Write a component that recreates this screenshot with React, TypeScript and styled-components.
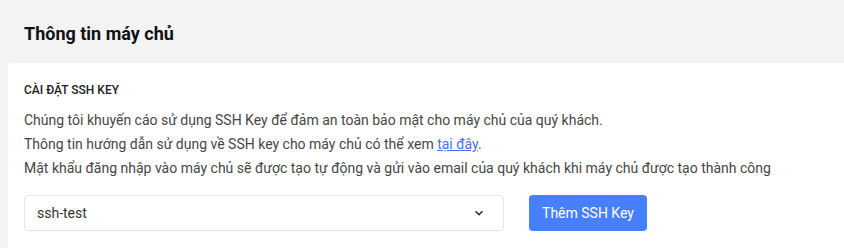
import styled, { createGlobalStyle } from "styled-components";

const GlobalStyle = createGlobalStyle`
  body {
    margin: 0;
    background: #f3f3f3;
    font-family: Roboto, "Liberation Sans", sans-serif;
  }
`;

const Page = styled.div`
  padding-left: 8px;
  min-height: 248px;
  display: flex;
  flex-direction: column;
`;

const Header = styled.header`
  height: 63px;
  padding: 22px 16px 0;
  box-sizing: border-box;
`;

const PageTitle = styled.h1`
  margin: 0;
  font-size: 18px;
  line-height: 24px;
  font-weight: 700;
  color: #111;
`;

const Card = styled.section`
  flex: 1;
  background: #fff;
  border-top-left-radius: 4px;
  padding: 19px 16px 16px;
`;

const CardTitle = styled.h2`
  margin: 0 0 10px;
  font-size: 12px;
  line-height: 16px;
  font-weight: 500;
  color: #222;
  text-transform: uppercase;
`;

const Text = styled.p`
  margin: 0 0 15px;
  font-size: 14px;
  line-height: 24px;
  color: #464646;
`;

const Link = styled.a`
  color: #4a6cf7;
  text-decoration: underline;
`;

const Row = styled.div`
  display: flex;
  align-items: center;
  gap: 25px;
`;

const Select = styled.div`
  width: 480px;
  height: 36px;
  box-sizing: border-box;
  border: 1px solid #e6e6e6;
  border-radius: 4px;
  padding: 0 19px 0 12px;
  display: flex;
  align-items: center;
  justify-content: space-between;
  font-size: 14px;
  color: #333;
`;

const Button = styled.button`
  width: 118px;
  height: 36px;
  border: none;
  border-radius: 4px;
  background: #4680ff;
  color: #fff;
  font-family: inherit;
  font-size: 14px;
`;

export default function App() {
  return (
    <>
      <GlobalStyle />
      <Page>
        <Header>
          <PageTitle>Thông tin máy chủ</PageTitle>
        </Header>
        <Card>
          <CardTitle>Cài đặt SSH key</CardTitle>
          <Text>
            Chúng tôi khuyến cáo sử dụng SSH Key để đảm an toàn bảo mật cho máy chủ của quý khách.
            <br />
            Thông tin hướng dẫn sử dụng về SSH key cho máy chủ có thể xem <Link href="#">tại đây</Link>.
            <br />
            Mật khẩu đăng nhập vào máy chủ sẽ được tạo tự động và gửi vào email của quý khách khi máy chủ được tạo thành công
          </Text>
          <Row>
            <Select>
              <span>ssh-test</span>
              <svg width="10" height="6" viewBox="0 0 10 6">
                <path d="M1.5 1.2 5 4.6 8.5 1.2" fill="none" stroke="#333" strokeWidth="1.6" />
              </svg>
            </Select>
            <Button>Thêm SSH Key</Button>
          </Row>
        </Card>
      </Page>
    </>
  );
}
